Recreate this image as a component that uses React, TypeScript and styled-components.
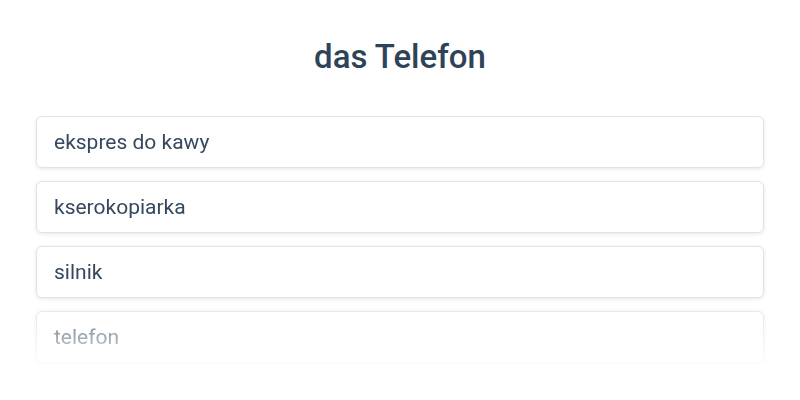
import React from "react";
import styled, { createGlobalStyle } from "styled-components";

const GlobalStyle = createGlobalStyle`
  html, body {
    margin: 0;
    padding: 0;
    background: #ffffff;
    font-family: Roboto, "Noto Sans", Arial, sans-serif;
  }
  * { box-sizing: border-box; }
`;

const Page = styled.main`
  width: 800px;
  height: 400px;
  padding: 38px 36px 0;
  display: flex;
  flex-direction: column;
  overflow: hidden;
`;

const Title = styled.h1`
  margin: 0 0 40px;
  height: 38px;
  line-height: 38px;
  font-size: 33px;
  font-weight: 500;
  text-align: center;
  color: #2f4358;
`;

const List = styled.div`
  display: flex;
  flex-direction: column;
  gap: 13px;
  height: 256px;
  padding: 0 3px;
  margin: 0 -3px;
  overflow: hidden;
  -webkit-mask-image: linear-gradient(to bottom, #000 0, #000 182px, transparent 256px);
  mask-image: linear-gradient(to bottom, #000 0, #000 182px, transparent 256px);
`;

const Option = styled.div`
  flex: 0 0 52px;
  display: flex;
  align-items: center;
  padding: 0 17px;
  border: 1px solid #e3e3e3;
  border-radius: 6px;
  background: #ffffff;
  box-shadow: 0 1px 4px rgba(0, 0, 0, 0.1);
  font-size: 21px;
  color: #34495e;
`;

const options = ["ekspres do kawy", "kserokopiarka", "silnik", "telefon"];

export default function App() {
  return (
    <>
      <GlobalStyle />
      <Page>
        <Title>das Telefon</Title>
        <List>
          {options.map((o) => (
            <Option key={o}>{o}</Option>
          ))}
        </List>
      </Page>
    </>
  );
}
